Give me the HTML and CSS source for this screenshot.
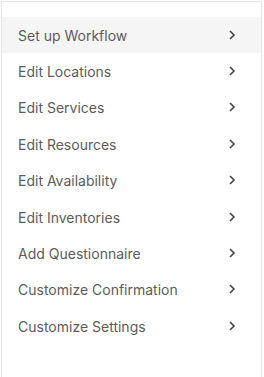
FILE: index.html
```html
<!DOCTYPE html>
<html>
<head>
<meta charset="utf-8">
<link rel="stylesheet" href="styles.css">
</head>
<body>
<div class="panel">
  <ul class="menu">
    <li class="item active"><span class="label">Set up Workflow</span><svg class="chev" viewBox="0 0 8 12"><path d="M2 2l4 4-4 4"/></svg></li>
    <li class="item"><span class="label">Edit Locations</span><svg class="chev" viewBox="0 0 8 12"><path d="M2 2l4 4-4 4"/></svg></li>
    <li class="item"><span class="label">Edit Services</span><svg class="chev" viewBox="0 0 8 12"><path d="M2 2l4 4-4 4"/></svg></li>
    <li class="item"><span class="label">Edit Resources</span><svg class="chev" viewBox="0 0 8 12"><path d="M2 2l4 4-4 4"/></svg></li>
    <li class="item"><span class="label">Edit Availability</span><svg class="chev" viewBox="0 0 8 12"><path d="M2 2l4 4-4 4"/></svg></li>
    <li class="item"><span class="label">Edit Inventories</span><svg class="chev" viewBox="0 0 8 12"><path d="M2 2l4 4-4 4"/></svg></li>
    <li class="item"><span class="label">Add Questionnaire</span><svg class="chev" viewBox="0 0 8 12"><path d="M2 2l4 4-4 4"/></svg></li>
    <li class="item"><span class="label">Customize Confirmation</span><svg class="chev" viewBox="0 0 8 12"><path d="M2 2l4 4-4 4"/></svg></li>
    <li class="item"><span class="label">Customize Settings</span><svg class="chev" viewBox="0 0 8 12"><path d="M2 2l4 4-4 4"/></svg></li>
  </ul>
</div>
</body>
</html>
```

FILE: styles.css
```css
html, body {
  margin: 0;
  padding: 0;
  background: #ffffff;
  overflow: hidden;
}
body {
  font-family: Inter, "Liberation Sans", sans-serif;
}
.panel {
  margin: 1px 2px 0 1px;
  height: calc(100vh - 1px);
  border: 1px solid #e6e6e6;
  border-bottom: none;
  box-sizing: border-box;
  padding-top: 15px;
}
.menu {
  list-style: none;
  margin: 0;
  padding: 0;
}
.item {
  height: 36.4px;
  display: flex;
  align-items: center;
  justify-content: space-between;
  padding: 0 25px 0 16px;
  font-size: 14px;
  color: #5c5c5c;
}
.item.active {
  background: #f5f5f5;
}
.chev {
  width: 8px;
  height: 12px;
  margin-top: -1px;
  fill: none;
  stroke: #444444;
  stroke-width: 1.6;
}
```
